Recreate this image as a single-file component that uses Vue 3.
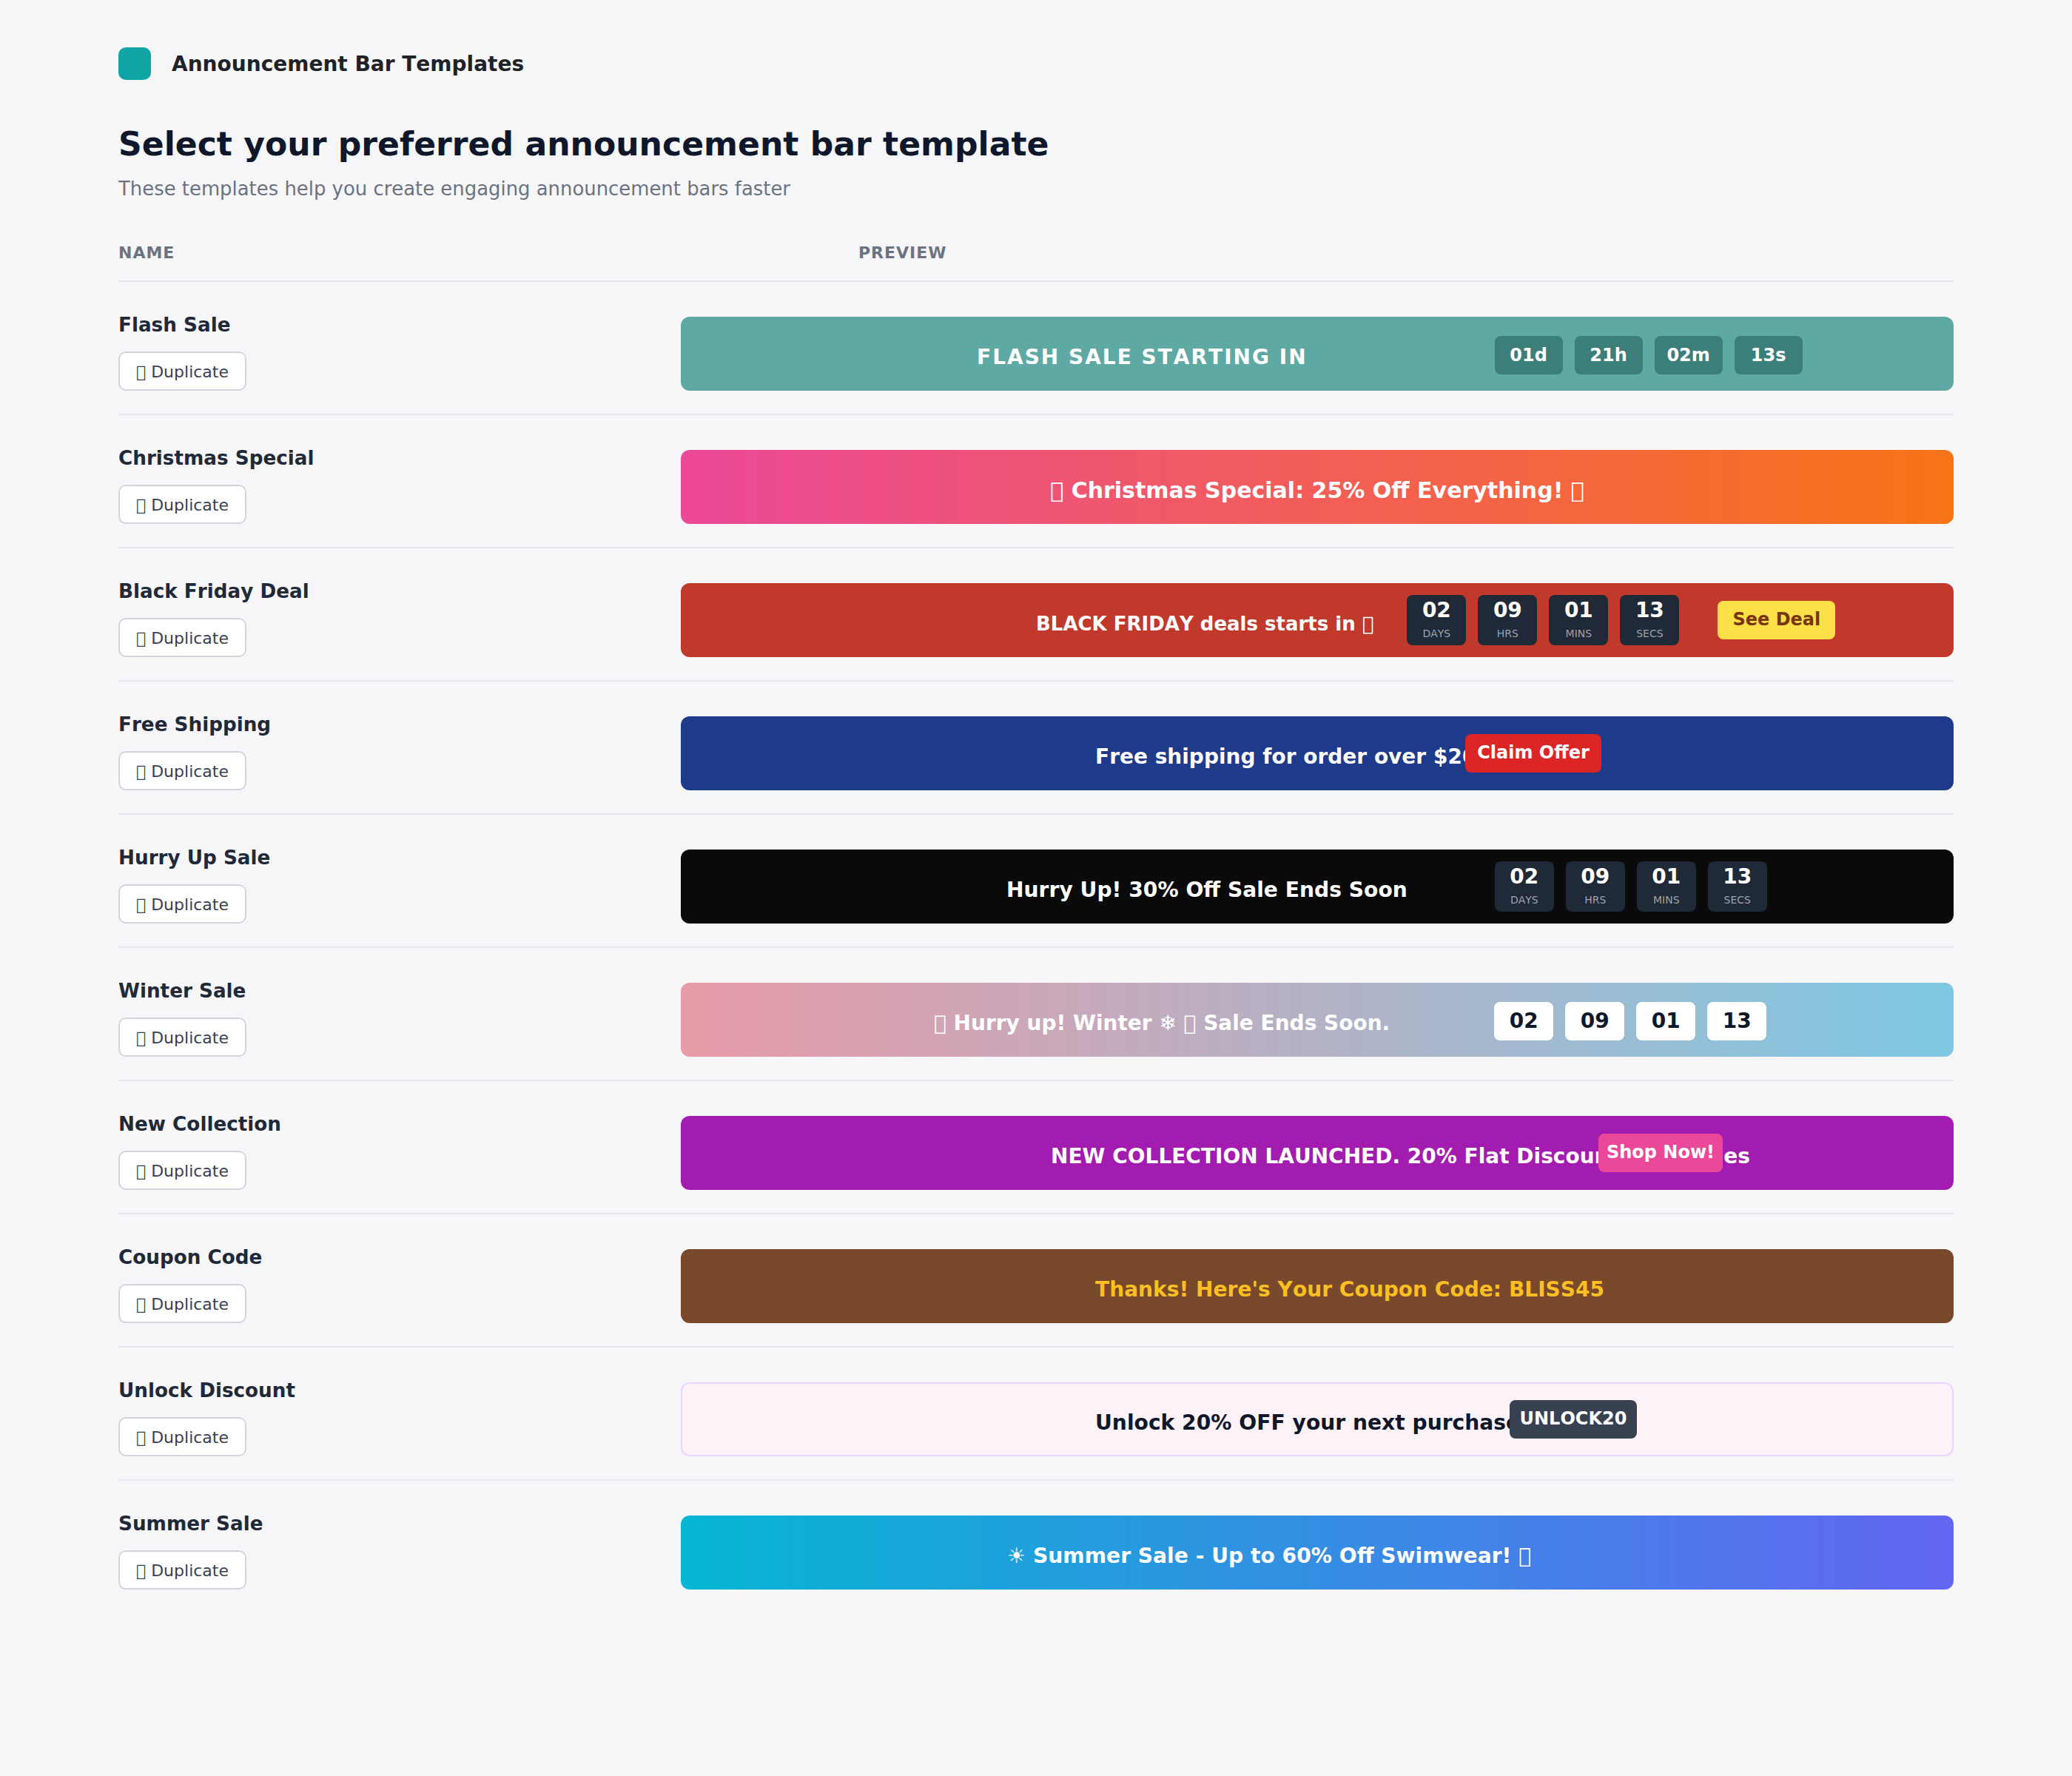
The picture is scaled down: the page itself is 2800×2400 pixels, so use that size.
<template>
  <div class="page">
    <header class="brand">
      <span class="logo"></span>
      <span class="brand-name">Announcement Bar Templates</span>
    </header>

    <h1 class="title">Select your preferred announcement bar template</h1>
    <p class="subtitle">These templates help you create engaging announcement bars faster</p>

    <div class="table-head">
      <span class="head-name">NAME</span>
      <span>PREVIEW</span>
    </div>

    <div v-for="t in templates" :key="t.name" class="row">
      <div class="row-info">
        <h3 class="row-name">{{ t.name }}</h3>
        <button class="dup-btn">{{ box }} Duplicate</button>
      </div>

      <div class="bar" :class="t.cls">
        <span class="bar-text">{{ t.text }}</span>
        <div v-if="t.timer" class="timer">
          <div v-for="u in t.timer" :key="u.value" class="time-box">
            <span class="time-value">{{ u.value }}</span>
            <span v-if="u.label" class="time-label">{{ u.label }}</span>
          </div>
        </div>
        <span v-if="t.deal" class="deal-btn">{{ t.deal }}</span>
        <span v-if="t.cta" class="cta">{{ t.cta }}</span>
      </div>
    </div>
  </div>
</template>

<script setup>
// the reference shows its emoji as empty "missing glyph" boxes
const box = '\uE000';

const fullTimer = [
  { value: '02', label: 'DAYS' },
  { value: '09', label: 'HRS' },
  { value: '01', label: 'MINS' },
  { value: '13', label: 'SECS' },
];

const templates = [
  {
    name: 'Flash Sale',
    cls: 'flash',
    text: 'FLASH SALE STARTING IN',
    timer: [{ value: '01d' }, { value: '21h' }, { value: '02m' }, { value: '13s' }],
  },
  { name: 'Christmas Special', cls: 'christmas', text: `${box} Christmas Special: 25% Off Everything! ${box}` },
  {
    name: 'Black Friday Deal',
    cls: 'friday',
    text: `BLACK FRIDAY deals starts in ${box}`,
    timer: fullTimer,
    deal: 'See Deal',
  },
  { name: 'Free Shipping', cls: 'shipping', text: 'Free shipping for order over $200', cta: 'Claim Offer' },
  { name: 'Hurry Up Sale', cls: 'hurry', text: 'Hurry Up! 30% Off Sale Ends Soon', timer: fullTimer },
  {
    name: 'Winter Sale',
    cls: 'winter',
    text: `${box} Hurry up! Winter \u2744\uFE0E ${box} Sale Ends Soon.`,
    timer: [{ value: '02' }, { value: '09' }, { value: '01' }, { value: '13' }],
  },
  {
    name: 'New Collection',
    cls: 'collection',
    text: 'NEW COLLECTION LAUNCHED. 20% Flat Discount on Clothes',
    cta: 'Shop Now!',
  },
  { name: 'Coupon Code', cls: 'coupon', text: "Thanks! Here's Your Coupon Code: BLISS45" },
  { name: 'Unlock Discount', cls: 'unlock', text: 'Unlock 20% OFF your next purchase', cta: 'UNLOCK20' },
  { name: 'Summer Sale', cls: 'summer', text: `\u2600\uFE0E Summer Sale - Up to 60% Off Swimwear! ${box}` },
];
</script>

<style>
body {
  background: #f6f6f9;
}
</style>

<style scoped>
.page {
  box-sizing: border-box;
  width: 2800px;
  height: 2400px;
  padding: 64px 160px 0;
  background: #f6f6f9;
  font-family: "DejaVu Sans", sans-serif;
  font-kerning: none;
  color: #1f2937;
}

.brand {
  display: flex;
  align-items: center;
  gap: 28px;
  height: 44px;
}

.logo {
  width: 44px;
  height: 44px;
  border-radius: 10px;
  background: #0ea5a4;
}

.brand-name {
  font-size: 28px;
  font-weight: 700;
  color: #1f2328;
}

.title {
  margin: 59px 0 0;
  font-size: 44.1px;
  line-height: 56px;
  font-weight: 700;
  color: #0f172a;
}

.subtitle {
  margin: 14px 0 0;
  font-size: 25.9px;
  line-height: 36px;
  color: #6b7280;
}

.table-head {
  display: flex;
  margin-top: 55px;
  padding-bottom: 23px;
  border-bottom: 2px solid #e5e7eb;
  font-size: 22px;
  line-height: 28px;
  font-weight: 700;
  letter-spacing: 1px;
  color: #6b7280;
}

.head-name {
  width: 1000px;
}

.row {
  display: flex;
  box-sizing: border-box;
  height: 180px;
  padding-top: 47px;
  border-bottom: 2px solid #e5e7eb;
}

.row:last-child {
  border-bottom: none;
}

.row-info {
  width: 760px;
  flex-shrink: 0;
}

.row-name {
  margin: -4px 0 0;
  font-size: 26.24px;
  line-height: 30px;
  font-weight: 700;
  color: #1f2937;
}

.dup-btn {
  display: block;
  box-sizing: border-box;
  width: 173px;
  height: 53px;
  margin-top: 21px;
  padding: 2px 0 0;
  background: #fff;
  border: 2px solid #d1d5db;
  border-radius: 10px;
  font-family: inherit;
  font-size: 22px;
  color: #374151;
}

.bar {
  position: relative;
  display: flex;
  align-items: center;
  box-sizing: border-box;
  width: 1720px;
  height: 100px;
  border-radius: 12px;
  font-size: 28px;
  font-weight: 700;
  color: #fff;
}

.bar-text {
  position: relative;
  top: 4px;
  white-space: nowrap;
}

.timer {
  display: flex;
  gap: 16px;
}

.time-box {
  display: flex;
  flex-direction: column;
  align-items: center;
  justify-content: center;
  box-sizing: border-box;
  width: 80px;
  height: 68px;
  padding-bottom: 4px;
  border-radius: 8px;
  background: #1f2937;
}

.time-value {
  font-size: 28px;
  line-height: 34px;
  font-weight: 700;
}

.time-label {
  margin-top: 6px;
  font-size: 14px;
  line-height: 16px;
  font-weight: 400;
  color: #9ca3af;
}

.deal-btn {
  margin-left: 52px;
  width: 159px;
  height: 52px;
  line-height: 50px;
  text-align: center;
  border-radius: 8px;
  background: #fde047;
  color: #78350f;
  font-size: 24px;
}

.cta {
  position: absolute;
  top: 24px;
  height: 52px;
  line-height: 50px;
  text-align: center;
  border-radius: 8px;
  font-size: 24px;
}

/* per template */
.flash {
  padding-left: 400px;
  background: #5fa9a4;
}

.flash .bar-text {
  letter-spacing: 2px;
}

.flash .timer {
  margin-top: 4px;
  margin-left: 253px;
}

.flash .time-box {
  width: 92px;
  height: 52px;
  padding-bottom: 0;
  background: #3c7f7a;
}

.flash .time-value {
  font-size: 24px;
}

.christmas {
  justify-content: center;
  background: linear-gradient(90deg, #ec4899, #f97316);
  font-size: 30px;
}

.friday {
  padding-left: 480px;
  background: #c0392b;
  font-size: 26px;
}

.friday .bar-text {
  top: 5px;
}

.friday .timer {
  margin-left: 45px;
}

.shipping {
  padding-left: 560px;
  background: #1e3a8a;
}

.shipping .cta {
  left: 1060px;
  width: 184px;
  background: #dc2626;
}

.hurry {
  padding-left: 440px;
  background: #0a0a0a;
  font-size: 28.16px;
}

.hurry .timer {
  margin-left: 118px;
}

.winter {
  padding-left: 342px;
  background: linear-gradient(90deg, #e89ba8, #7ec8e3);
}

.winter .timer {
  margin-top: 4px;
  margin-left: 141px;
}

.winter .time-box {
  height: 52px;
  padding-bottom: 0;
  background: #fff;
  color: #0f172a;
}

.collection {
  padding-left: 500px;
  background: #a21caf;
}

.collection .cta {
  left: 1240px;
  width: 168px;
  background: #ec4899;
}

.coupon {
  padding-left: 560px;
  background: #78492a;
  color: #fbbf24;
  font-size: 28.08px;
}

.unlock {
  padding-left: 558px;
  background: #fdf2f8;
  border: 2px solid #e9d5ff;
  color: #0f172a;
  font-size: 28.16px;
}

.unlock .cta {
  left: 1118px;
  top: 22px;
  width: 172px;
  background: #374151;
  color: #fff;
}

.summer {
  padding-left: 441px;
  background: linear-gradient(90deg, #06b6d4, #6366f1);
  font-size: 28.16px;
}
</style>
